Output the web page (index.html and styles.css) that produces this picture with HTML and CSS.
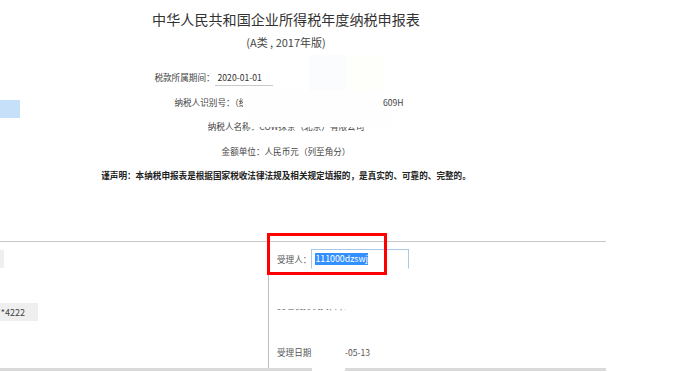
FILE: index.html
```html
<!DOCTYPE html>
<html lang="zh-CN">
<head>
<meta charset="utf-8">
<title>企业所得税年度纳税申报表</title>
<link rel="stylesheet" href="styles.css">
</head>
<body>
<div class="page">
  <div class="head">
    <div class="side"><div class="tile"></div></div>
    <div class="center">
      <h1 class="title">中华人民共和国企业所得税年度纳税申报表</h1>
      <div class="sub">(A类 , 2017年版)</div>
      <div class="rows">
        <div class="row row-period">税款所属期间：<span class="date">2020-01-01</span></div>
        <div class="row row-id">纳税人识别号：（统一社会信用代码）91110108306532609H</div>
        <div class="row">纳税人名称：COW抹茶（北京）有限公司</div>
        <div class="row">金额单位：人民币元（列至角分）</div>
        <div class="row decl">谨声明：本纳税申报表是根据国家税收法律法规及相关规定填报的，是真实的、可靠的、完整的。</div>
      </div>
    </div>
  </div>

  <div class="table">
    <div class="cell left">
      <div class="field f1"></div>
      <div class="field f2"><span>**4222</span></div>
    </div>
    <div class="cell right">
      <div class="item"><span class="lbl">受理人：</span><span class="inp"><span class="sel">111000dzswj</span></span></div>
      <div class="item">受理税务机关(章)：</div>
      <div class="item">受理日期：<span class="val">2020-05-13</span></div>
    </div>
  </div>

  <div class="mask mask-a"></div>
  <div class="mask mask-b"></div>
  <div class="mask mask-c"></div>
  <div class="mask mask-d"></div>
  <div class="mask mask-e"></div>
  <div class="mask mask-f"></div>
  <div class="mask mask-g"></div>
  <div class="redbox"></div>
</div>
</body>
</html>
```

FILE: styles.css
```css
html, body {
  margin: 0;
  padding: 0;
  background: #ffffff;
}
body {
  font-family: "Noto Sans CJK SC", "Noto Sans", sans-serif;
  color: #444;
  width: 700px;
  height: 372px;
  overflow: hidden;
}
.page {
  position: relative;
  width: 700px;
  height: 372px;
}

/* header */
.head {
  display: flex;
}
.side {
  flex: 0 0 20px;
}
.tile {
  margin-top: 100px;
  width: 20px;
  height: 18px;
  background: #c6e0f9;
}
.center {
  width: 532px;
  text-align: center;
}
.title {
  margin: 0;
  padding-top: 9px;
  font-size: 14.1px;
  line-height: 20px;
  font-weight: normal;
  color: #333;
  white-space: nowrap;
}
.sub {
  margin-top: 5px;
  font-size: 11px;
  line-height: 16px;
  color: #444;
}
.rows {
  margin-top: 15px;
}
.row {
  font-size: 8.6px;
  line-height: 24.5px;
  color: #444;
  white-space: nowrap;
}
.row-period {
  padding-right: 142px;
}
.row-id {
  padding-left: 6px;
}
.date {
  display: inline-block;
  width: 58px;
  padding-left: 3px;
  line-height: 15px;
  text-align: left;
  border-bottom: 1px solid #c9c9c9;
  color: #333;
}
.decl {
  font-weight: bold;
  color: #222;
}

/* table */
.table {
  margin-top: 53.5px;
  width: 606px;
  display: grid;
  grid-template-columns: 269px 1fr;
  border-top: 1px solid #c6c6c6;
  border-bottom: 3px solid #dadada;
}
.cell {
  font-size: 8.6px;
  color: #555;
}
.left {
  border-right: 1px solid #bdbdbd;
  padding-top: 8px;
}
.field {
  height: 18px;
  background: #efefef;
}
.f1 {
  width: 4px;
}
.f2 {
  margin-top: 35px;
  width: 38px;
  padding-right: 13px;
  box-sizing: border-box;
  display: flex;
  justify-content: flex-end;
  align-items: center;
  overflow: hidden;
  white-space: nowrap;
  font-size: 9px;
  color: #444;
}
.right {
  padding: 7px 0 6px 8px;
}
.item {
  height: 20px;
  display: flex;
  align-items: center;
  white-space: nowrap;
}
.item + .item {
  margin-top: 26px;
}
.item:last-child {
  margin-top: 27px;
}
.inp {
  box-sizing: border-box;
  width: 98px;
  height: 20px;
  padding-left: 3px;
  display: inline-flex;
  align-items: center;
  border: 1px solid #a8cae8;
  border-bottom-color: #ffffff;
}
.sel {
  background: #3390ff;
  color: #ffffff;
  font-size: 8.8px;
  line-height: 12px;
}
.val {
  margin-left: 6px;
}

/* redaction overlays */
.mask {
  position: absolute;
  background: #ffffff;
}
.mask-a { left: 273px; top: 55px; width: 36px; height: 35px; }
.mask-b { left: 309px; top: 55px; width: 38px; height: 35px; background: #fbfcfe; }
.mask-c { left: 347px; top: 55px; width: 36px; height: 35px; background: #fefefa; }
.mask-d { left: 243px; top: 90px; width: 140px; height: 23px; background: #fefefe; }
.mask-e { left: 248px; top: 113px; width: 142px; height: 14px; background: #fefefe; }
.mask-f { left: 270px; top: 288px; width: 140px; height: 21px; }
.mask-g { left: 312px; top: 330px; width: 33px; height: 42px; }

.redbox {
  position: absolute;
  left: 267px;
  top: 233px;
  width: 120px;
  height: 42px;
  box-sizing: border-box;
  border: 3px solid #ff0000;
}
```
